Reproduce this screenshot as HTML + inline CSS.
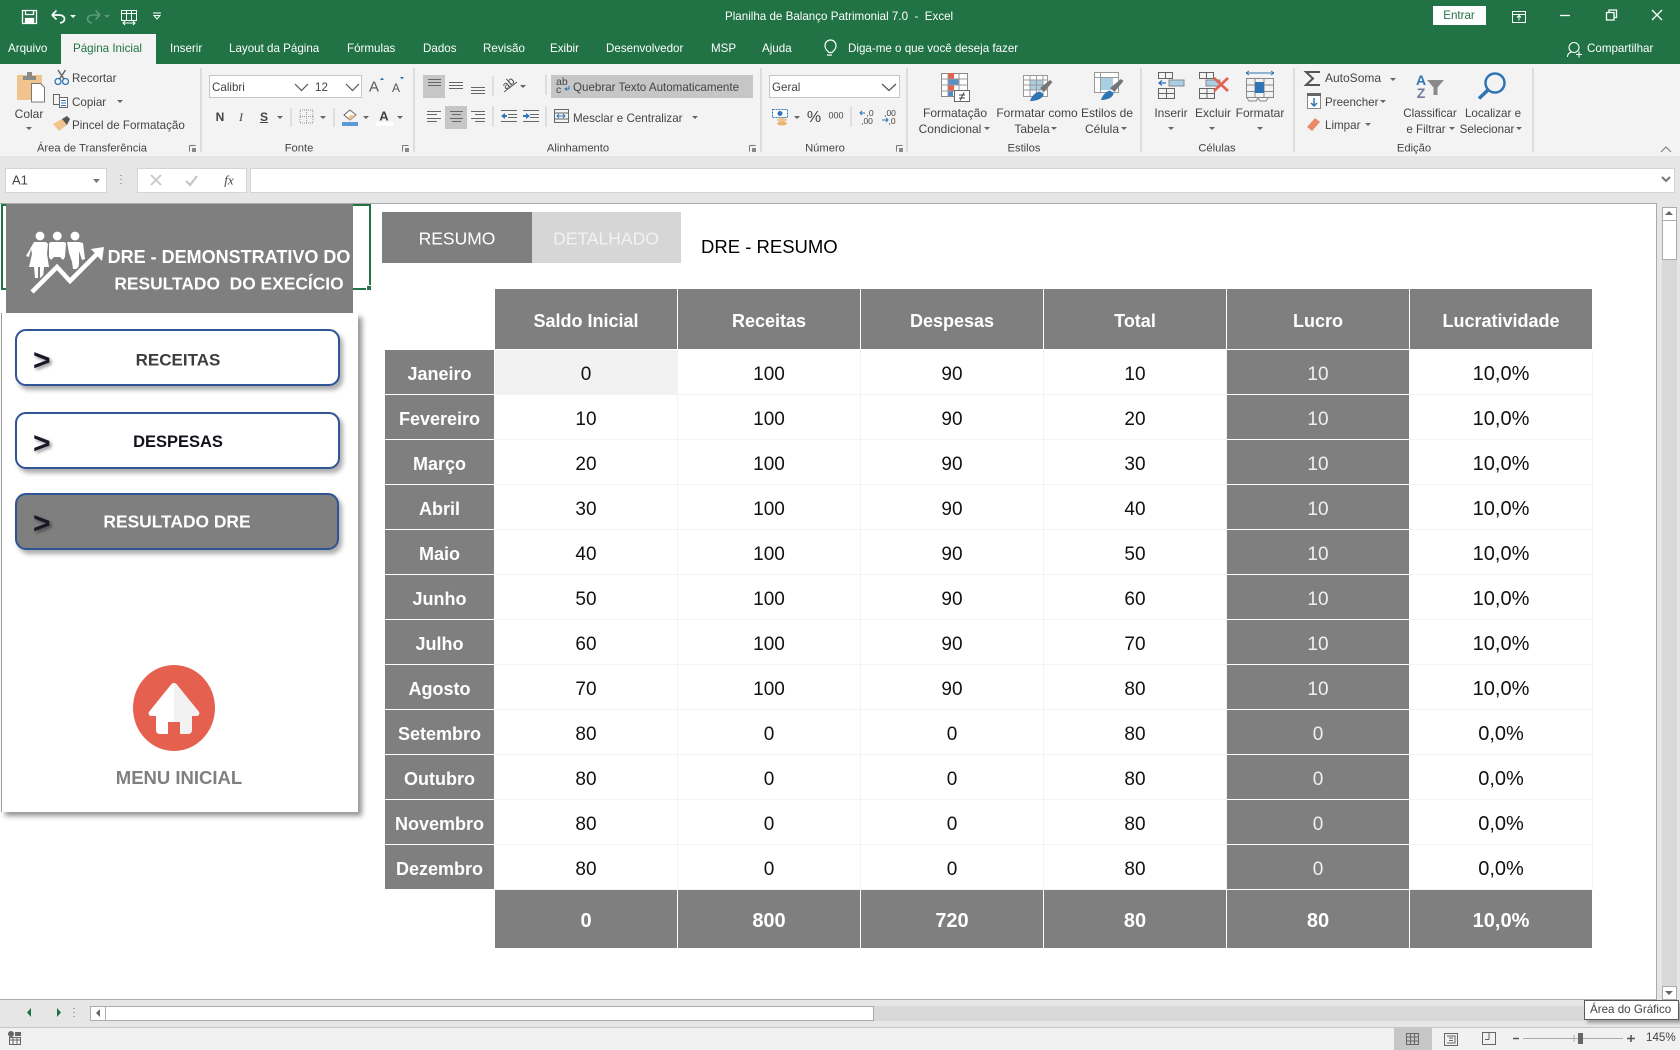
<!DOCTYPE html>
<html lang="pt-BR"><head><meta charset="utf-8"><title>Planilha de Balanço Patrimonial 7.0 - Excel</title>
<style>
html,body{margin:0;padding:0;width:1680px;height:1050px;overflow:hidden;background:#fff;font-family:"Liberation Sans",sans-serif}
.b{position:absolute}
.t,.c{position:absolute;white-space:pre;line-height:1;font-size:11.6px;color:#444;margin-top:1px}
.t{transform:translateY(-50%)}
.c{transform:translate(-50%,-50%)}
.w{color:#fff}
.big{font-size:12px}
.btn{position:absolute;box-sizing:border-box;left:15px;width:325px;height:57px;border:2px solid #2f5597;border-radius:11px;background:#fff;box-shadow:3px 4px 5px rgba(0,0,0,.33)}
.gt{position:absolute;font-weight:700;line-height:1;white-space:pre;transform:translate(-50%,-50%)}
.chev{position:absolute;left:33px;font-weight:700;font-size:30px;line-height:1;color:#1b1626;text-shadow:2px 2px 3px rgba(0,0,0,.45);transform:translateY(-50%)}
table{position:absolute;left:385px;top:289px;border-collapse:separate;border-spacing:0;table-layout:fixed;width:1208px}
td{padding:4px 0 0;text-align:center;box-sizing:border-box;height:45px;font-size:19px;color:#111;border-right:1px solid #f3f3f3;border-bottom:1px solid #f3f3f3;line-height:1}
tr.h td{height:61px;background:#7f7f7f;color:#fff;font-weight:700;font-size:18px;border-right:1px solid #fff;border-bottom:1px solid #fff}
tr.h td.e{background:#fff;border:0}
tr.f td{height:58px;background:#7f7f7f;color:#fff;font-weight:700;font-size:20px;border-right:1px solid #fff;border-bottom:0}
tr.f td.e{background:#fff;border:0}
td.l{background:#7f7f7f;color:#fff;font-weight:700;font-size:18px;border-right:1px solid #fff;border-bottom:1px solid #fff}
td.g{background:#7f7f7f;color:#f0f0f0;border-right:1px solid #fff;border-bottom:1px solid #fff}
td.p{font-size:20px}
</style></head><body>

<div class="b" style="left:0;top:0;width:1680px;height:64px;background:#217346"></div>
<div class="b" style="left:0;top:64px;width:1680px;height:92px;background:#f3f3f3"></div>
<div class="b" style="left:61px;top:34px;width:95px;height:30px;background:#f3f3f3"></div>
<div class="b" style="left:0;top:156px;width:1680px;height:47px;background:#e6e6e6"></div>

<!-- title bar -->
<span class="t w" style="left:725px;top:16px;font-size:11.6px">Planilha de Balanço Patrimonial 7.0  -  Excel</span>
<div class="b" style="left:1433px;top:6px;width:53px;height:19px;background:#fff"></div>
<span class="c" style="left:1459px;top:15px;color:#217346">Entrar</span>

<!-- tabs -->
<span class="t w" style="left:8px;top:48px">Arquivo</span>
<span class="t" style="left:73px;top:48px;color:#217346">Página Inicial</span>
<span class="t w" style="left:170px;top:48px">Inserir</span>
<span class="t w" style="left:229px;top:48px">Layout da Página</span>
<span class="t w" style="left:347px;top:48px">Fórmulas</span>
<span class="t w" style="left:423px;top:48px">Dados</span>
<span class="t w" style="left:483px;top:48px">Revisão</span>
<span class="t w" style="left:550px;top:48px">Exibir</span>
<span class="t w" style="left:606px;top:48px">Desenvolvedor</span>
<span class="t w" style="left:711px;top:48px">MSP</span>
<span class="t w" style="left:762px;top:48px">Ajuda</span>
<span class="t w" style="left:848px;top:48px">Diga-me o que você deseja fazer</span>
<span class="t w" style="left:1587px;top:48px">Compartilhar</span>

<!-- ribbon highlights -->
<div class="b" style="left:423px;top:75px;width:22px;height:23px;background:#c6c6c6"></div>
<div class="b" style="left:445px;top:106px;width:22px;height:23px;background:#c6c6c6"></div>
<div class="b" style="left:551px;top:75px;width:202px;height:23px;background:#c6c6c6"></div>

<!-- ribbon inputs -->
<div class="b" style="left:209px;top:75px;width:103px;height:21px;background:#fff;border:1px solid #c6c6c6"></div>
<div class="b" style="left:312px;top:75px;width:49px;height:21px;background:#fff;border:1px solid #c6c6c6;border-left:0"></div>
<div class="b" style="left:769px;top:75px;width:129px;height:21px;background:#fff;border:1px solid #c6c6c6"></div>

<!-- clipboard -->
<span class="c" style="left:29px;top:113px;font-size:12px">Colar</span>
<span class="t" style="left:72px;top:78px">Recortar</span>
<span class="t" style="left:72px;top:102px">Copiar</span>
<span class="t" style="left:72px;top:125px">Pincel de Formatação</span>
<span class="c" style="left:92px;top:148px;font-size:11.2px">Área de Transferência</span>

<!-- font -->
<span class="t" style="left:212px;top:87px">Calibri</span>
<span class="t" style="left:315px;top:87px">12</span>
<span class="c" style="left:374px;top:86px;font-size:15px;color:#555">A</span>
<span class="c" style="left:396px;top:87px;font-size:12px;color:#555">A</span>
<span class="c" style="left:220px;top:116px;font-weight:700;font-size:12px">N</span>
<span class="c" style="left:241px;top:116px;font-style:italic;font-size:12px;font-family:'Liberation Serif',serif">I</span>
<span class="c" style="left:264px;top:116px;font-weight:700;font-size:12px;text-decoration:underline">S</span>
<span class="c" style="left:384px;top:115px;font-weight:700;font-size:13px">A</span>
<span class="c" style="left:299px;top:148px;font-size:11.2px">Fonte</span>

<!-- alignment -->
<span class="c" style="left:509px;top:83px;font-size:11px;transform:translate(-50%,-50%) rotate(-40deg)">ab</span>
<span class="t" style="left:556px;top:81px;font-size:10.5px">ab</span>
<span class="t" style="left:556px;top:89px;font-size:10.5px">c</span>
<span class="t" style="left:573px;top:87px">Quebrar Texto Automaticamente</span>
<span class="t" style="left:573px;top:118px">Mesclar e Centralizar</span>
<span class="c" style="left:578px;top:148px;font-size:11.2px">Alinhamento</span>

<!-- number -->
<span class="t" style="left:772px;top:87px">Geral</span>
<span class="c" style="left:814px;top:117px;font-size:16px">%</span>
<span class="c" style="left:836px;top:115px;font-size:9px">000</span>
<span class="c" style="left:870px;top:112px;font-size:8.5px">,0</span>
<span class="c" style="left:867px;top:120px;font-size:8.5px">,00</span>
<span class="c" style="left:890px;top:112px;font-size:8.5px">,00</span>
<span class="c" style="left:892px;top:120px;font-size:8.5px">,0</span>
<span class="c" style="left:825px;top:148px;font-size:11.2px">Número</span>

<!-- styles -->
<span class="c big" style="left:955px;top:112px">Formatação</span>
<span class="c big" style="left:950px;top:128px">Condicional</span>
<span class="c big" style="left:1037px;top:112px">Formatar como</span>
<span class="c big" style="left:1032px;top:128px">Tabela</span>
<span class="c big" style="left:1107px;top:112px">Estilos de</span>
<span class="c big" style="left:1102px;top:128px">Célula</span>
<span class="c" style="left:1024px;top:148px;font-size:11.2px">Estilos</span>

<!-- cells -->
<span class="c big" style="left:1171px;top:112px">Inserir</span>
<span class="c big" style="left:1213px;top:112px">Excluir</span>
<span class="c big" style="left:1260px;top:112px">Formatar</span>
<span class="c" style="left:1217px;top:148px;font-size:11.2px">Células</span>

<!-- editing -->
<span class="t" style="left:1325px;top:77px;font-size:12px">AutoSoma</span>
<span class="t" style="left:1325px;top:102px">Preencher</span>
<span class="t" style="left:1325px;top:125px">Limpar</span>
<span class="c" style="left:1421px;top:79px;font-weight:700;font-size:14px;color:#2f75b5">A</span>
<span class="c" style="left:1421px;top:92px;font-weight:700;font-size:14px;color:#767b9a">Z</span>
<span class="c" style="left:1430px;top:113px">Classificar</span>
<span class="c" style="left:1426px;top:129px">e Filtrar</span>
<span class="c" style="left:1493px;top:113px">Localizar e</span>
<span class="c" style="left:1487px;top:129px">Selecionar</span>
<span class="c" style="left:1414px;top:148px;font-size:11.2px">Edição</span>

<!-- formula bar -->
<div class="b" style="left:5px;top:168px;width:100px;height:23px;background:#fff;border:1px solid #d4d4d4"></div>
<div class="b" style="left:137px;top:168px;width:108px;height:23px;background:#fff;border:1px solid #d4d4d4"></div>
<div class="b" style="left:250px;top:168px;width:1423px;height:23px;background:#fff;border:1px solid #d4d4d4"></div>
<span class="t" style="left:12px;top:179px;font-size:13px">A1</span>
<span class="c" style="left:229px;top:179px;font-size:13px;font-family:'Liberation Serif',serif;font-style:italic">fx</span>

<!-- sheet -->
<div class="b" style="left:0;top:203px;width:1657px;height:797px;background:#fff;border-top:1px solid #ababab;border-bottom:1px solid #ababab;box-sizing:border-box;border-right:1px solid #ababab"></div>
<div class="b" style="left:1657px;top:203px;width:23px;height:797px;background:#e6e6e6"></div>
<div class="b" style="left:1662px;top:207px;width:15px;height:792px;background:#d8d8d8"></div>
<div class="b" style="left:1662px;top:207px;width:13px;height:12px;background:#fff;border:1px solid #ababab"></div>
<div class="b" style="left:1662px;top:220px;width:13px;height:38px;background:#fff;border:1px solid #ababab"></div>
<div class="b" style="left:1662px;top:986px;width:13px;height:12px;background:#fff;border:1px solid #ababab"></div>

<!-- selection -->
<div class="b" style="left:1px;top:204px;width:366px;height:82px;border:2px solid #217346"></div>
<div class="b" style="left:366px;top:285px;width:6px;height:6px;background:#217346;border:1px solid #fff;box-sizing:border-box"></div>

<!-- left panel -->
<div class="b" style="left:1px;top:313px;width:357px;height:499px;background:#fff;border-left:1px solid #9a9a9a;box-sizing:border-box;box-shadow:4px 4px 5px rgba(0,0,0,.42)"></div>
<div class="b" style="left:6px;top:204px;width:347px;height:109px;background:#7f7f7f"></div>
<span class="gt" style="left:229px;top:257px;font-size:18px;color:#fff">DRE - DEMONSTRATIVO DO</span>
<span class="gt" style="left:229px;top:284px;font-size:17.4px;color:#fff">RESULTADO  DO EXECÍCIO</span>

<div class="btn" style="top:329px"></div>
<div class="btn" style="top:412px"></div>
<div class="btn" style="top:493px;width:324px;background:#7f7f7f"></div>
<span class="chev" style="top:361px">&gt;</span>
<span class="chev" style="top:444px">&gt;</span>
<span class="chev" style="top:524px">&gt;</span>
<span class="gt" style="left:178px;top:360px;font-size:17px;color:#403c3c">RECEITAS</span>
<span class="gt" style="left:178px;top:442px;font-size:16.5px;color:#14101c">DESPESAS</span>
<span class="gt" style="left:177px;top:522px;font-size:17.4px;color:#fff">RESULTADO DRE</span>
<span class="gt" style="left:179px;top:778px;font-size:18.5px;color:#7f7f7f">MENU INICIAL</span>

<!-- tabs in sheet -->
<div class="b" style="left:382px;top:212px;width:150px;height:51px;background:#7f7f7f"></div>
<div class="b" style="left:532px;top:212px;width:149px;height:51px;background:#d6d6d6"></div>
<span class="c" style="left:457px;top:238px;font-size:17.5px;color:#fff">RESUMO</span>
<span class="c" style="left:606px;top:238px;font-size:17.5px;color:#f2f2f2">DETALHADO</span>
<span class="t" style="left:701px;top:246px;font-size:18.5px;color:#000">DRE - RESUMO</span>

<table>
<colgroup><col style="width:110px"><col style="width:183px"><col style="width:183px"><col style="width:183px"><col style="width:183px"><col style="width:183px"><col style="width:183px"></colgroup>
<tr class="h"><td class="e"></td><td>Saldo Inicial</td><td>Receitas</td><td>Despesas</td><td>Total</td><td>Lucro</td><td>Lucratividade</td></tr>
<tr><td class="l">Janeiro</td><td style="background:#f2f2f2">0</td><td>100</td><td>90</td><td>10</td><td class="g">10</td><td class="p">10,0%</td></tr>
<tr><td class="l">Fevereiro</td><td>10</td><td>100</td><td>90</td><td>20</td><td class="g">10</td><td class="p">10,0%</td></tr>
<tr><td class="l">Março</td><td>20</td><td>100</td><td>90</td><td>30</td><td class="g">10</td><td class="p">10,0%</td></tr>
<tr><td class="l">Abril</td><td>30</td><td>100</td><td>90</td><td>40</td><td class="g">10</td><td class="p">10,0%</td></tr>
<tr><td class="l">Maio</td><td>40</td><td>100</td><td>90</td><td>50</td><td class="g">10</td><td class="p">10,0%</td></tr>
<tr><td class="l">Junho</td><td>50</td><td>100</td><td>90</td><td>60</td><td class="g">10</td><td class="p">10,0%</td></tr>
<tr><td class="l">Julho</td><td>60</td><td>100</td><td>90</td><td>70</td><td class="g">10</td><td class="p">10,0%</td></tr>
<tr><td class="l">Agosto</td><td>70</td><td>100</td><td>90</td><td>80</td><td class="g">10</td><td class="p">10,0%</td></tr>
<tr><td class="l">Setembro</td><td>80</td><td>0</td><td>0</td><td>80</td><td class="g">0</td><td class="p">0,0%</td></tr>
<tr><td class="l">Outubro</td><td>80</td><td>0</td><td>0</td><td>80</td><td class="g">0</td><td class="p">0,0%</td></tr>
<tr><td class="l">Novembro</td><td>80</td><td>0</td><td>0</td><td>80</td><td class="g">0</td><td class="p">0,0%</td></tr>
<tr><td class="l">Dezembro</td><td>80</td><td>0</td><td>0</td><td>80</td><td class="g">0</td><td class="p">0,0%</td></tr>
<tr class="f"><td class="e"></td><td>0</td><td>800</td><td>720</td><td>80</td><td>80</td><td>10,0%</td></tr>
</table>

<!-- bottom -->
<div class="b" style="left:0;top:1000px;width:1680px;height:27px;background:#e6e6e6"></div>
<div class="b" style="left:90px;top:1006px;width:1494px;height:15px;background:#d8d8d8"></div>
<div class="b" style="left:90px;top:1006px;width:14px;height:13px;background:#fff;border:1px solid #ababab"></div>
<div class="b" style="left:105px;top:1006px;width:767px;height:13px;background:#fff;border:1px solid #ababab"></div>
<div class="b" style="left:0;top:1027px;width:1680px;height:23px;background:#f1f1f1;border-top:1px solid #c6c6c6;box-sizing:border-box"></div>
<div class="b" style="left:1394px;top:1028px;width:38px;height:22px;background:#c6c6c6"></div>
<span class="t" style="left:1646px;top:1037px">145%</span>
<div class="b" style="left:1584px;top:1000px;width:93px;height:18px;background:#fff;border:1px solid #5a5a5a;box-shadow:3px 3px 3px rgba(0,0,0,.3)"></div>
<span class="t" style="left:1590px;top:1009px">Área do Gráfico</span>

<!-- icons -->
<svg class="b" style="left:0;top:0" width="1680" height="1050" viewBox="0 0 1680 1050" fill="none">
<!-- title bar icons -->
<g stroke="#fff" stroke-width="1.3">
<path d="M22.500 10.500h14v13h-14z"/><path d="M25.500 10.500v4h8v-4"/><path d="M25.500 23.500v-5h8v5" fill="#fff"/>
<path d="M52 15l4.500-4.500M52 15l4.500 4.500M52 15h7c3.500 0 5.500 1.800 5.500 4s-2 3.800-4.500 3.800" stroke-width="1.700"/>
<g stroke-width="1"><path d="M121.500 10.500h15v10h-15zM121.500 13.500h15M126.500 10.500v10M131.500 10.500v10"/>
<path d="M123 23h12M125 21l-2 2 2 2M133 21l2 2-2 2"/>
<path d="M153 13h8M154 15.500h6l-3 3.500z"/></g>
<path d="M1512.500 11.500h13v11h-13zM1512.500 14.500h13M1519 20.500v-5M1517 17.500l2-2 2 2" stroke-width="1"/>
<path d="M1560 15.500h10"/>
<path d="M1606.500 12.500h7.500v7.500h-7.500zM1609 12.500v-2.500h7.500v7.500h-2.500"/>
<path d="M1652 10l10 10M1662 10l-10 10"/>
<g stroke-width="1.100"><circle cx="1574" cy="47.500" r="5"/><path d="M1567.500 57c0-3 2-4.500 4-5M1579 51.500v6M1576 54.500h6"/></g>
</g>
<path d="M100 15l-4.500-4.500M100 15l-4.500 4.500M100 15h-7c-3.500 0-5.500 1.800-5.500 4s2 3.800 4.500 3.800" stroke="#5c9a78" stroke-width="1.600"/>
<path d="M70 15h6l-3 3z" fill="#fff"/>
<path d="M104 15h6l-3 3z" fill="#5c9a78"/>
<path d="M828 53.500c-2-2-4-3.500-4-7a5.500 5.500 0 0 1 11 0c0 3.500-2 5-4 7zM826 56h5" stroke="#fff" stroke-width="1.200" transform="translate(1 -1)"/>
<!-- group dividers -->
<path d="M201 68v84M414 68v84M761 68v84M907 68v84M1141 68v84M1294 68v84M1533 68v84" stroke="#c4c4c4"/>
<path d="M493 76v20M546 75v20M291 108v19M334 108v19M493 106v21M546 106v21M851 107v20" stroke="#c9c9c9"/>
<!-- launchers -->
<g stroke="#777" stroke-width="1"><path d="M189.500 145.500h6M189.500 145.500v6M402.500 145.500h6M402.500 145.500v6M749.500 145.500h6M749.500 145.500v6M896.500 145.500h6M896.500 145.500v6"/></g>
<path d="M192 148h4v4h-4zM405 148h4v4h-4zM752 148h4v4h-4zM899 148h4v4h-4z" fill="#888"/>
<!-- dropdown arrows -->
<path d="M26 127h6l-3 3zM117 100h6l-3 3zM277 116h6l-3 3zM320 116h6l-3 3zM363 116h6l-3 3zM397 116h6l-3 3zM520 85h6l-3 3zM692 116h6l-3 3zM794 116h6l-3 3zM984 127h6l-3 3zM1051 127h6l-3 3zM1121 127h6l-3 3zM1168 127h6l-3 3zM1209 127h6l-3 3zM1257 127h6l-3 3zM1390 78h6l-3 3zM1380 100h6l-3 3zM1365 123h6l-3 3zM1449 127h6l-3 3zM1516 127h6l-3 3z" fill="#666"/>
<path d="M93 179h7l-3.500 4z" fill="#777"/>
<!-- chevrons -->
<path d="M295 84l6.500 6.500 6.500-6.500M346 84l6.500 6.500 6.500-6.500M882 84l7 6.500 7-6.500" stroke="#555" stroke-width="1.200"/>
<path d="M1662 177l4 4 4-4" stroke="#777" stroke-width="2"/>
<path d="M1661 152l5-5 5 5" stroke="#777"/>
<!-- clipboard icon -->
<path d="M17 75h25v25H17z" fill="#f2c48d"/><path d="M23 76h13v4H23z" fill="#8a8a8a"/><path d="M27 72h5v4h-5z" fill="#8a8a8a"/>
<path d="M31.500 83.500h9l4 4v14.500h-13z" fill="#fff" stroke="#777"/>
<circle cx="58" cy="81.500" r="3" stroke="#2f75b5" stroke-width="1.300"/><circle cx="65.500" cy="81.500" r="3" stroke="#2f75b5" stroke-width="1.300"/><path d="M59.500 79l6-9M64 79l-6-9" stroke="#666" stroke-width="1.500"/>
<path d="M53.500 94.500h6v10h-6z" stroke="#666"/><path d="M59.500 97.500h8v10h-8z" fill="#fff" stroke="#666"/><path d="M61 100.500h5M61 103h5M61 105.500h5" stroke="#2f75b5"/>
<path d="M53 124l9-5 5 6-8 6z" fill="#f2c48d"/><path d="M62 119l5-3 3 3-3 6z" fill="#555"/>
<!-- font icons -->
<path d="M300 110h13v13h-13z" stroke="#999" stroke-dasharray="1 1"/><path d="M306.500 110v13M300 116.500h13" stroke="#999" stroke-dasharray="1 1"/>
<path d="M342 122h16v4h-16z" fill="#5b9bd5"/><path d="M344 115l6-5 6 5-6 5z" stroke="#666" fill="#fff"/><path d="M350 115l6 0-6 5-2-2z" fill="#f2c48d"/>
<path d="M376 122h17v4h-17z" fill="#fff"/>
<path d="M380 80l2-2.500 2 2.500z" fill="#2f75b5"/><path d="M400 77l2 2.500 2-2.500z" fill="#2f75b5"/>
<!-- alignment lines -->
<g stroke="#666" stroke-width="1">
<path d="M428 79.500h13M428 82.500h13M428 85.500h13M449 82.500h14M449 85.500h14M449 88.500h14M471 87.500h14M471 90.500h14M471 93.500h14"/>
<path d="M427 111.500h14M427 114.500h10M427 118.500h14M427 121.500h10M450 111.500h13M452 114.500h9M450 118.500h13M452 121.500h9M471 111.500h14M475 114.500h10M471 118.500h14M475 121.500h10"/>
<path d="M501 110.500h16M508 114.500h9M508 117.500h9M501 121.500h16M523 110.500h16M530 114.500h9M530 117.500h9M523 121.500h16"/>
<path d="M504 92l13-10" stroke="#555"/>
<path d="M554.500 109.500h14v13h-14zM554.500 113h14M554.500 119h14"/>
</g>
<path d="M501 116l4-3v2h2v2h-2v2zM530 116l-4-3v2h-3v2h3v2z" fill="#2f75b5"/>
<path d="M557 116h8M559 114l-2 2 2 2M563 114l2 2-2 2" stroke="#2f75b5"/>
<path d="M569 86v3h-3M567 87.500l-2 1.500 2 1.500" stroke="#2f75b5"/>
<!-- number icons -->
<path d="M772.500 109.500h15v8h-15z" fill="#fff" stroke="#2f75b5" stroke-dasharray="2 1"/><circle cx="780" cy="113.500" r="2.500" fill="#2f75b5"/>
<ellipse cx="782" cy="120" rx="5" ry="2" fill="#f2c48d"/><ellipse cx="782" cy="123.500" rx="5" ry="2" fill="#eab676"/>
<path d="M860 113h5M862 111l-2 2 2 2M882 120h6M886 118l2 2-2 2" stroke="#2f75b5"/>
<!-- cond format -->
<path d="M941.500 73.500h26v23h-26z" fill="#fff" stroke="#888"/>
<path d="M948 73h6v6h-6z" fill="#e5604f"/><path d="M948 79h11v6h-11z" fill="#2f75b5" opacity=".8"/><path d="M948 85h6v6h-6z" fill="#e5604f"/><path d="M948 91h5v5h-5z" fill="#2f75b5" opacity=".85"/>
<path d="M941.500 79h26M941.500 85h26M941.500 91h26M948 73.500v23M959 73.500v23" stroke="#999"/>
<path d="M954.500 90.500h15v11h-15z" fill="#fff" stroke="#666"/><path d="M959 95h6M959 98h6M964 92.500l-4 8" stroke="#444"/>
<!-- format table -->
<path d="M1023.500 75.500h24v21h-24z" fill="#fff" stroke="#999"/>
<path d="M1030 80h13v10h-13z" fill="#a9cfe4"/>
<path d="M1023.500 80h24M1023.500 85h24M1023.500 90h24M1030 75.500v21M1036.500 75.500v21M1043 75.500v21" stroke="#999"/>
<path d="M1040 88l10-8 2.500 2-8.500 10z" fill="#767676"/>
<path d="M1030 101c1-4 5-9 10-9.500l3.500 2.500c0 4-6 7-13.500 7z" fill="#2f75b5"/>
<!-- cell styles -->
<path d="M1094.500 72.500h24v20h-24z" fill="#fff" stroke="#999"/><path d="M1094.500 77.500h24M1100.500 72.500v20" stroke="#999"/>
<path d="M1101 78h12v12h-12z" fill="#a9cfe4"/>
<path d="M1110 88l11-9 2.500 2-9 11z" fill="#767676"/>
<path d="M1101 100c1-4 5-9 9-9.500l3.500 2.500c0 4-5.500 7-12.500 7z" fill="#2f75b5"/>
<!-- insert -->
<path d="M1158.500 72.500h14v6h-14zM1165.500 72.500v6M1158.500 88.500h16v10h-16zM1158.500 93.500h16M1166.500 88.500v10" stroke="#666"/>
<path d="M1169 80h15v6h-15z" fill="#a9cfe4" stroke="#888"/><path d="M1159 83h7M1162 80.500l-3 2.500 3 2.500" stroke="#2f75b5" stroke-width="1.300"/>
<!-- delete -->
<path d="M1199.500 72.500h14v6h-14zM1206.500 72.500v6M1199.500 88.500h15v10h-15zM1199.500 93.500h15M1207 88.500v10" stroke="#666"/>
<path d="M1206 80h14v6h-14z" fill="#a9cfe4" stroke="#888"/><path d="M1214 78l14 13M1228 78l-14 13" stroke="#e5604f" stroke-width="2.600"/>
<!-- format -->
<path d="M1246 73h28M1246 73l3-2M1246 73l3 2M1274 73l-3-2M1274 73l-3 2" stroke="#2f75b5"/>
<path d="M1246.500 78.500h27v19h-27zM1246.500 85h27M1246.500 91.500h27M1255 78.500v19M1264 78.500v19" stroke="#888"/>
<path d="M1255 82h9v11h-9z" fill="#2f75b5"/><path d="M1247 98l2 3h7l2-3M1258 98l2 3h6l2-3" stroke="#888"/>
<!-- edit -->
<path d="M1320 72h-14l7 6.500-7 6.500h14" stroke="#555" stroke-width="2"/>
<path d="M1307.500 94.500h13v14h-13z" fill="#fff" stroke="#888"/><path d="M1307 93h14v3h-14z" fill="#666"/><path d="M1314 98v8M1311 103l3 3 3-3" stroke="#2f75b5" stroke-width="1.500"/>
<path d="M1307 127l8-9 5 4-8 9z" fill="#e98a6d"/>
<path d="M1427 80h17l-6.500 7.500v7.500h-4v-7.500z" fill="#8a8a8a"/>
<circle cx="1495" cy="83" r="9.500" stroke="#2f75b5" stroke-width="2.500"/><path d="M1488 90l-9 8.500" stroke="#2f75b5" stroke-width="3.500"/>
<!-- formula -->
<path d="M151 175l10 10M161 175l-10 10" stroke="#c6c6c6" stroke-width="1.800"/>
<path d="M186 181l4 4 7-9" stroke="#c6c6c6" stroke-width="2.200"/>
<path d="M121 175v1M121 179v1M121 183v1" stroke="#aaa" stroke-width="2"/>
<!-- people + arrow logo -->
<g fill="#fff">
<circle cx="40" cy="236" r="4.400"/><circle cx="57.300" cy="236" r="4.400"/><circle cx="75" cy="236" r="4.400"/>
<path d="M34 242h12l2 2-1 10 2 13h-5l-1 11h-3v-11h-2v11h-3l-1-11h-5l3-13-1-5-2 8-3-1z"/>
<path d="M49 243l2-1h13l2 1-1 14-2 3-3-3h-6l-3 3-2-3z"/>
<path d="M67 242h12l4 1 2 16-3 1-3-9v13l-1 5h-5l-1-7-3-9z"/>
</g>
<path d="M32 292l25-25 13 14 29-29" stroke="#7f7f7f" stroke-width="8"/>
<path d="M32 292l25-25 13 14 29-29" stroke="#fff" stroke-width="4.500"/>
<path d="M91 249l13-2-2 14z" fill="#fff"/>
<!-- home -->
<ellipse cx="174" cy="708" rx="41" ry="43" fill="#e5604f"/>
<path d="M174 683c-1.500 0-2.500 1-3.500 2.200l-21 26c-2 2.500-.500 4.800 2.500 4.800h4v14c0 2.500 1.500 4 4 4h8v-12h6z" fill="#fff"/>
<path d="M174 683c1.500 0 2.500 1 3.500 2.200l21 26c2 2.500.500 4.800-2.500 4.800h-4v14c0 2.500-1.500 4-4 4h-8v-12h-6z" fill="#f2f2f2"/>
<!-- scroll arrows -->
<path d="M1665 215l4-4 4 4zM1665 991h8l-4 4zM100 1009v8l-4-4z" fill="#666"/>
<path d="M31 1008v9l-4-4.500zM57 1008v9l4-4.500z" fill="#217346"/>
<path d="M74 1008v1M74 1012v1M74 1016v1" stroke="#aaa" stroke-width="2"/>
<!-- status -->
<circle cx="11" cy="1034" r="3" fill="#666"/><path d="M15 1032h6v4h-6z" fill="#666"/>
<path d="M9.500 1037.500h11v7h-11zM9.500 1040h11M13 1037.500v7M17 1037.500v7" stroke="#666"/>
<path d="M1406.500 1033.500h12v11h-12zM1406.500 1037h12M1406.500 1041h12M1410.500 1033.500v11M1414.500 1033.500v11" stroke="#666"/>
<path d="M1444.500 1033.500h13v12h-13zM1447 1036h8v7h-8M1449 1038h4M1449 1040.500h4" stroke="#666"/>
<path d="M1482.500 1032.500h13v12h-13zM1489 1032.500v7h-4" stroke="#666"/>
<path d="M1513 1038.500h6M1627 1038.500h8M1631 1035v7" stroke="#555" stroke-width="1.600"/>
<path d="M1523 1038.500h100M1574 1035v7" stroke="#aaa"/>
<path d="M1578 1033h5v11h-5z" fill="#666"/>
</svg>
</body></html>
